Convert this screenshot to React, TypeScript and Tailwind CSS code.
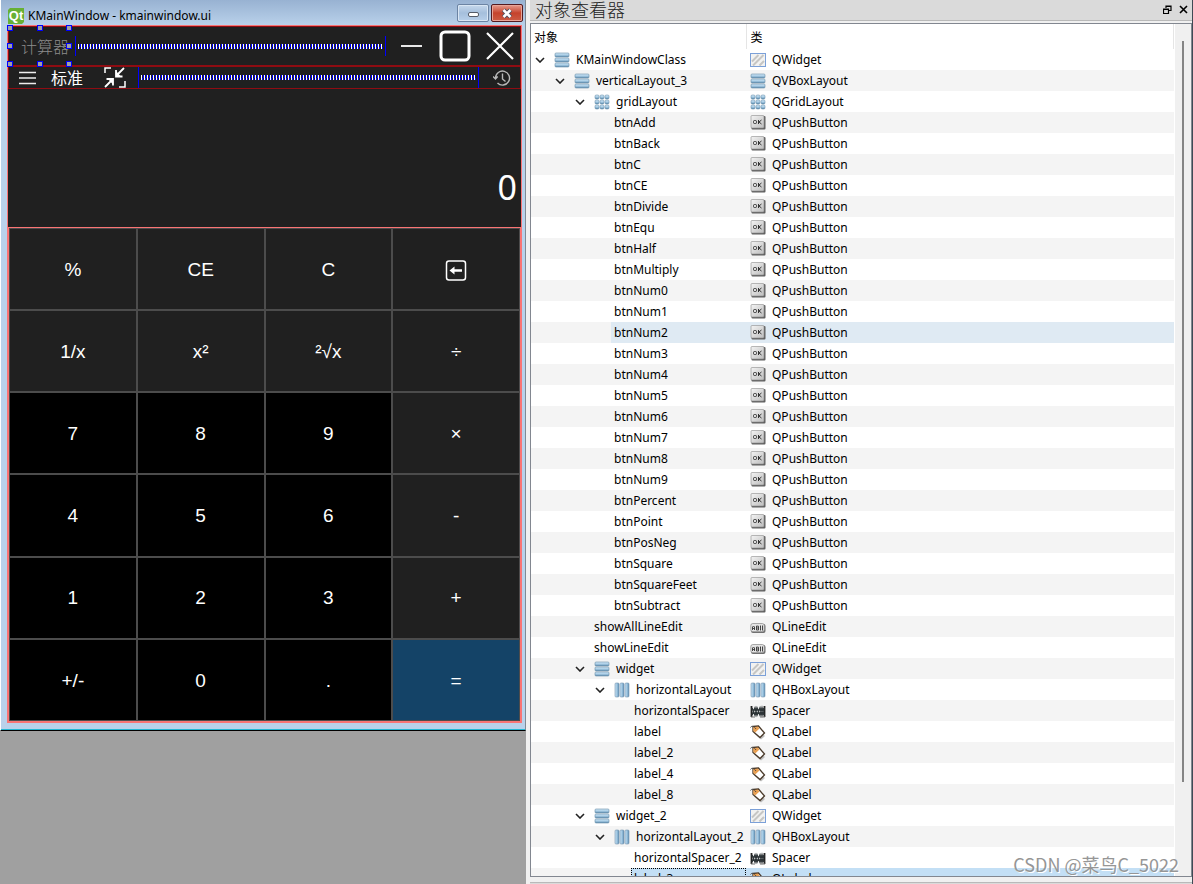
import { useState } from "react";

type Kind = "widget" | "vbox" | "hbox" | "grid" | "button" | "edit" | "spacer" | "label";

type TreeItem = { name: string; cls: string; kind: Kind; depth: number; icon?: Kind };

const BUTTONS = [
  "btnAdd", "btnBack", "btnC", "btnCE", "btnDivide", "btnEqu", "btnHalf", "btnMultiply",
  "btnNum0", "btnNum1", "btnNum2", "btnNum3", "btnNum4", "btnNum5", "btnNum6", "btnNum7",
  "btnNum8", "btnNum9", "btnPercent", "btnPoint", "btnPosNeg", "btnSquare", "btnSquareFeet",
  "btnSubtract",
];

const ITEMS: TreeItem[] = [
  { name: "KMainWindowClass", cls: "QWidget", kind: "widget", depth: 0, icon: "vbox" },
  { name: "verticalLayout_3", cls: "QVBoxLayout", kind: "vbox", depth: 1, icon: "vbox" },
  { name: "gridLayout", cls: "QGridLayout", kind: "grid", depth: 2, icon: "grid" },
  ...BUTTONS.map((name): TreeItem => ({ name, cls: "QPushButton", kind: "button", depth: 3 })),
  { name: "showAllLineEdit", cls: "QLineEdit", kind: "edit", depth: 2 },
  { name: "showLineEdit", cls: "QLineEdit", kind: "edit", depth: 2 },
  { name: "widget", cls: "QWidget", kind: "widget", depth: 2, icon: "vbox" },
  { name: "horizontalLayout", cls: "QHBoxLayout", kind: "hbox", depth: 3, icon: "hbox" },
  { name: "horizontalSpacer", cls: "Spacer", kind: "spacer", depth: 4 },
  { name: "label", cls: "QLabel", kind: "label", depth: 4 },
  { name: "label_2", cls: "QLabel", kind: "label", depth: 4 },
  { name: "label_4", cls: "QLabel", kind: "label", depth: 4 },
  { name: "label_8", cls: "QLabel", kind: "label", depth: 4 },
  { name: "widget_2", cls: "QWidget", kind: "widget", depth: 2, icon: "vbox" },
  { name: "horizontalLayout_2", cls: "QHBoxLayout", kind: "hbox", depth: 3, icon: "hbox" },
  { name: "horizontalSpacer_2", cls: "Spacer", kind: "spacer", depth: 4 },
  { name: "label_3", cls: "QLabel", kind: "label", depth: 4 },
];

const INDENT = ["pl-0", "pl-5", "pl-10", "pl-15", "pl-20"];

const KEYS = [
  ["%", "CE", "C", "back"],
  ["1/x", "x²", "²√x", "÷"],
  ["7", "8", "9", "×"],
  ["4", "5", "6", "-"],
  ["1", "2", "3", "+"],
  ["+/-", "0", ".", "="],
];

function KindIcon({ kind }: { kind: Kind }) {
  return (
    <svg width="16" height="16" viewBox="0 0 16 16" className="shrink-0">
      <defs>
        <linearGradient id="barV" x1="0" y1="0" x2="0" y2="1">
          <stop offset="0" stopColor="#cfe6f5" />
          <stop offset="0.5" stopColor="#a9cde6" />
          <stop offset="1" stopColor="#5a89ac" />
        </linearGradient>
        <linearGradient id="barH" x1="0" y1="0" x2="1" y2="0">
          <stop offset="0" stopColor="#c9e2f3" />
          <stop offset="0.5" stopColor="#9cc4e0" />
          <stop offset="1" stopColor="#5d8db2" />
        </linearGradient>
        <linearGradient id="keyFace" x1="0" y1="0" x2="1" y2="1">
          <stop offset="0" stopColor="#f4f4f4" />
          <stop offset="1" stopColor="#bdbdbd" />
        </linearGradient>
      </defs>
      {kind === "vbox" &&
        [1, 6, 11].map((y) => (
          <rect key={y} x="1" y={y} width="14" height="4" rx="1" fill="url(#barV)" stroke="#6a8ea8" strokeWidth="0.6" />
        ))}
      {kind === "hbox" &&
        [1, 6, 11].map((x) => (
          <rect key={x} x={x} y="1" width="4" height="14" rx="1" fill="url(#barH)" stroke="#7796ae" strokeWidth="0.6" />
        ))}
      {kind === "grid" &&
        [1, 6, 11].map((y) =>
          [1, 6, 11].map((x) => (
            <rect key={`${x}-${y}`} x={x} y={y} width="4" height="4" rx="1.2" fill="url(#barV)" stroke="#5f86a3" strokeWidth="0.5" />
          ))
        )}
      {kind === "widget" && (
        <>
          <rect x="0.5" y="1.5" width="15" height="13" fill="#f2f2f1" stroke="#7ba0d8" />
          <path d="M2 9.5 8.5 3M3 13.5 13.5 3M9.5 13.5 14 9" stroke="#c6c6c4" strokeWidth="2" />
        </>
      )}
      {kind === "button" && (
        <>
          <rect x="1.5" y="1" width="14" height="13.5" rx="1" fill="#5f5f5f" />
          <rect x="1" y="0.5" width="13" height="12.5" rx="1" fill="url(#keyFace)" stroke="#8c8c8c" strokeWidth="0.6" />
          <rect x="3.5" y="5.5" width="3" height="3" rx="1" fill="none" stroke="#333" strokeWidth="1" />
          <path d="M8.500 5v4M11.500 5 9 7l2.500 2" fill="none" stroke="#333" strokeWidth="1" />
        </>
      )}
      {kind === "edit" && (
        <>
          <rect x="1" y="5" width="14.5" height="9" rx="2" fill="#6e6e6e" />
          <rect x="0.8" y="4.5" width="13.5" height="8.2" rx="2" fill="#e4e4e4" stroke="#888" strokeWidth="0.7" />
          <path
            d="M2.500 11V8l1-1 1 1v3M2.500 9.500h2M6.500 7v4h2V7.200zM6.500 9h2M10.500 7v4M10 7h1M10 11h1M12.500 6.500v5"
            fill="none"
            stroke="#333"
            strokeWidth="0.9"
          />
        </>
      )}
      {kind === "spacer" && (
        <>
          <path d="M1.500 3v11M14.500 3v11" stroke="#222" strokeWidth="1.800" />
          <path d="M2 5 5 12 7 5l3 7 2-7 2 7M2 12l3-7 2 7 3-7 2 7 2-7" fill="none" stroke="#2d3437" strokeWidth="1.500" />
          <path d="M1 14h4M10 14h5" stroke="#777" />
        </>
      )}
      {kind === "label" && (
        <>
          <path d="m6.500 4.500 8.500 7.500-4 3.500L4 9.500z" fill="#999" opacity="0.6" />
          <path d="M3 2.500 8.500 2l6 7-4.500 4.500L3 7.500z" fill="#fff" stroke="#4a3a2a" strokeWidth="1.300" />
          <path d="M3.200 3.200 8 2.600l1.500 2L5.200 8.400 3.300 7z" fill="#e9a052" />
          <path d="M6 5C4 2 1.500 1.500.5 3.500" fill="none" stroke="#444" strokeWidth="0.900" />
        </>
      )}
    </svg>
  );
}

function Chevron() {
  return (
    <svg width="10" height="6" viewBox="0 0 10 6" fill="none" stroke="#222" strokeWidth="1.6">
      <path d="m1 1 4 4 4-4" />
    </svg>
  );
}

// Zigzag that Designer draws for a horizontal spacer
function Spring({ id, tall }: { id: string; tall?: boolean }) {
  return (
    <div className={`flex flex-1 items-center border-x border-[#0000ff] px-0.5 ${tall ? "h-[21px]" : "h-5"}`}>
      <svg className="w-full" height="5" shapeRendering="crispEdges">
        <defs>
          <pattern id={id} width="3" height="5" patternUnits="userSpaceOnUse">
            <rect width="1" height="5" fill="#fff" />
            <rect x="1" y="3" width="1" height="2" fill="#0000ff" />
            <rect x="2" y="0" width="1" height="3" fill="#0000ff" />
          </pattern>
        </defs>
        <rect width="100%" height="5" fill={`url(#${id})`} />
      </svg>
    </div>
  );
}

function SelectionHandles() {
  const spots = [
    "-left-0.5 -top-0.5", "left-7 -top-0.5", "-right-0.5 -top-0.5",
    "-left-0.5 top-4", "-right-0.5 top-4",
    "-left-0.5 -bottom-0.5", "left-7 -bottom-0.5", "-right-0.5 -bottom-0.5",
  ];
  return (
    <>
      {spots.map((spot) => (
        <span key={spot} className={`absolute size-1.5 border border-[#0000ff] bg-[#a0a0a4] ${spot}`} />
      ))}
    </>
  );
}

function KeyButton({ label }: { label: string }) {
  const digit = /^[0-9.]$|^\+\/-$/.test(label);
  const bg = label === "=" ? "bg-[#144367]" : digit ? "bg-black" : "bg-[#202020]";
  return (
    <button
      aria-label={label === "back" ? "Backspace" : undefined}
      className={`flex min-h-20 items-center justify-center border border-[#4c4c4c] pt-0.5 ${bg}`}
    >
      {label === "back" ? (
        <svg width="22" height="22" viewBox="0 0 22 22" fill="none" stroke="#fff">
          <rect x="1.500" y="2" width="19" height="19" rx="2.500" strokeWidth="1.500" />
          <path d="M8 11.500h9" strokeWidth="2.500" />
          <path d="m4.500 11.500 5-4v8z" fill="#fff" stroke="none" />
        </svg>
      ) : (
        label
      )}
    </button>
  );
}

function CalculatorForm() {
  return (
    <div className="border border-[#fa7474] bg-[#202020]">
      {/* title row */}
      <div className="flex h-10 items-center border border-[#8f0c12]">
        <div className="relative flex h-full w-[61px] shrink-0 items-center pl-3 text-base text-[#8c8c8c]">
          <span className="font-['Noto_Sans_CJK_SC',sans-serif] leading-6 font-light">计算器</span>
          <SelectionHandles />
        </div>
        <div className="flex flex-1 items-center pl-[5px]">
          <Spring id="springTitle" />
        </div>
        <div className="flex items-center gap-[14px] pr-[5px] pl-[15px]">
          <button aria-label="Minimize">
            <svg width="24" height="32" viewBox="0 0 24 32" className="block">
              <path d="M0 16h21" stroke="#e8e8e8" strokeWidth="2" />
            </svg>
          </button>
          <button aria-label="Maximize">
            <svg width="32" height="32" viewBox="0 0 32 32" className="block">
              <rect x="2" y="2" width="28" height="28" rx="4" fill="none" stroke="#fff" strokeWidth="3" />
            </svg>
          </button>
          <button aria-label="Close">
            <svg width="30" height="32" viewBox="0 0 30 32" className="block">
              <path d="M2 3 28 29M28 3 2 29" stroke="#fff" strokeWidth="2.200" />
            </svg>
          </button>
        </div>
      </div>

      {/* mode row */}
      <div className="flex h-[23px] items-center border border-[#8f0c12]">
        <button aria-label="Menu" className="pl-[10px]">
          <svg width="18" height="14" viewBox="0 0 18 14" className="block">
            <path d="M0 1.500h17M0 7h17M0 12.500h17" stroke="#eee" strokeWidth="1.500" />
          </svg>
        </button>
        <span className="pb-0.5 pl-[14px] font-['Noto_Sans_CJK_SC',sans-serif] text-base leading-5 text-white">标准</span>
        <button aria-label="Keep on top" className="pl-[21px]">
          <svg width="22" height="21" viewBox="0 0 22 21" className="block" fill="none" stroke="#fff">
            <path d="M1 6V1h6M21 14v6h-6" strokeWidth="1.500" />
            <path d="m20 1-7 7M1 20l7-7" strokeWidth="1.800" />
            <path d="M12 3v6.500h6.500M2.500 12H9v6.500" strokeWidth="1.800" />
            <path d="m12 4 5 5.500h-5zM9 17.500 4 12h5z" fill="#fff" stroke="none" />
          </svg>
        </button>
        <div className="flex flex-1 items-center pl-3">
          <Spring id="springMode" tall />
        </div>
        <button aria-label="History" className="pr-[9px] pl-[14px]">
          <svg width="18" height="18" viewBox="0 0 18 18" className="block" fill="none" stroke="#b8b8b8" strokeWidth="1.400">
            <path d="M2.500 9a7 7 0 1 1 2 5M9.500 4.500V10l3 2.500M0 7.500l2.500 2.500 2.200-2.500" />
          </svg>
        </button>
      </div>

      <input
        aria-label="Expression"
        readOnly
        value=""
        className="block h-[58px] w-full bg-transparent px-1 text-right text-white outline-none"
      />
      <input
        aria-label="Result"
        readOnly
        value="0"
        className="block h-20 w-full bg-transparent px-1 text-right font-['Noto_Sans',sans-serif] text-[34px] leading-[80px] text-white outline-none"
      />

      <div className="grid min-h-[495px] grid-cols-4 border border-[#fa7474] font-['Liberation_Sans',sans-serif] text-[19px] text-white">
        {KEYS.flat().map((label) => (
          <KeyButton key={label} label={label} />
        ))}
      </div>
    </div>
  );
}

function FormWindow() {
  return (
    <section className="border-r border-b border-l border-r-[#7f8a94] border-b-black border-l-white bg-[#b9d1ea] font-['Noto_Sans',sans-serif]">
      <header className="flex h-[25px] items-start bg-linear-to-b from-[#98b2d2] to-[#b9d1ea] pr-0.5 pl-[7px]">
        <svg width="16" height="16" viewBox="0 0 16 16" className="mt-2 shrink-0">
          <path d="M2 0h14v14l-2 2H0V2z" fill="#67b035" />
          <text x="8" y="12" textAnchor="middle" fontSize="13" fontWeight="700" fontFamily="Liberation Sans" fill="#fff">
            Qt
          </text>
        </svg>
        <h1 className="mt-[7px] flex-1 truncate pl-1 text-xs leading-[18px] text-black">KMainWindow - kmainwindow.ui</h1>
        <div className="mt-1 flex gap-0.5">
          <button
            aria-label="Minimize window"
            className="flex h-[18px] w-8 items-end justify-center rounded-xs border border-[#6c84a3] bg-linear-to-b from-[#c6d8ec] via-[#a5bfdc] to-[#b8d0ea] pb-1 shadow-[inset_0_0_0_1px_#d9e6f4]"
          >
            <span className="h-[5px] w-[11px] rounded-xs border border-[#555c68] bg-white" />
          </button>
          <button
            aria-label="Close window"
            className="flex h-[18px] w-8 items-center justify-center rounded-xs border border-[#541a20] bg-linear-to-b from-[#e59a8d] via-[#c5422c] to-[#cc5c45] shadow-[inset_0_0_0_1px_#e8a598]"
          >
            <svg width="12" height="11" viewBox="0 0 12 11">
              <path d="m2.500 2 7 7M9.500 2l-7 7" stroke="#4d5060" strokeWidth="4.500" />
              <path d="m2.500 2 7 7M9.500 2l-7 7" stroke="#fff" strokeWidth="2.600" />
            </svg>
          </button>
        </div>
      </header>
      <div className="border-b border-[#25b7d3] pr-[3px] pb-1.5 pl-1.5">
        <CalculatorForm />
      </div>
    </section>
  );
}

function TreeRow({ item, hovered, selected, onSelect }: {
  item: TreeItem;
  hovered: boolean;
  selected: boolean;
  onSelect: () => void;
}) {
  const tint = selected ? "bg-[#c3dff5]" : hovered ? "bg-[#dfeaf3]" : "";
  return (
    <tr className="h-[21px] even:bg-[#f4f4f4]" onClick={onSelect} aria-selected={selected}>
      <td className="p-0">
        <div className={`flex h-[21px] ${INDENT[item.depth]}`}>
          <span className="flex w-5 shrink-0 items-center pl-1">{item.icon && <Chevron />}</span>
          <span
            className={`flex min-w-0 flex-1 items-center ${tint} ${selected ? "outline-1 -outline-offset-1 outline-black outline-dotted" : ""} gap-1.5 pl-[3px]`}
          >
            {item.icon && <KindIcon kind={item.icon} />}
            <span className="whitespace-nowrap">{item.name}</span>
          </span>
        </div>
      </td>
      <td className="p-0">
        <div className={`flex h-[21px] items-center gap-1.5 pl-1 ${tint}`}>
          <KindIcon kind={item.kind} />
          {item.cls}
        </div>
      </td>
    </tr>
  );
}

function ObjectInspector() {
  const [selected, setSelected] = useState("label_3");

  return (
    <section className="flex min-h-0 flex-col border-r border-[#3f4a55] bg-[#f0f0f0] pl-1">
      <header className="flex h-[21px] shrink-0 items-start border-b border-[#b9b9b9] bg-[#dadada] pr-1 pl-[5px]">
        <h2 className="flex-1 font-['Noto_Sans_CJK_SC',sans-serif] text-lg leading-[18px] font-light text-[#222]">对象查看器</h2>
        <button aria-label="Float" className="pt-[5px] pr-[7px]">
          <svg width="9" height="9" viewBox="0 0 9 9" fill="none" stroke="#000" className="block">
            <path d="M3 3V1h5v4.500H6M3 1.500h5M.5 4h5v4.500h-5zM.5 4.500h5" strokeWidth="1.200" />
          </svg>
        </button>
        <button aria-label="Close inspector" className="pt-[5px]">
          <svg width="9" height="9" viewBox="0 0 9 9" className="block">
            <path d="m1 1 7 7M8 1 1 8" stroke="#000" strokeWidth="1.600" />
          </svg>
        </button>
      </header>

      <div className="mt-0.5 flex min-h-0 flex-1 overflow-hidden border border-[#828790] bg-white">
        <div className="min-w-0 flex-1 overflow-hidden pr-px">
          <table className="w-full table-fixed border-collapse font-['Noto_Sans',sans-serif] text-xs leading-5 text-black">
            <thead>
              <tr className="h-[25px] font-['Noto_Sans_CJK_SC',sans-serif]">
                <th className="w-[215px] border-r border-[#e5e5e5] p-0 pl-[3px] text-left font-normal">对象</th>
                <th className="border-r border-[#e5e5e5] p-0 pl-1 text-left font-normal">类</th>
              </tr>
            </thead>
            <tbody>
              {ITEMS.map((item) => (
                <TreeRow
                  key={item.name}
                  item={item}
                  hovered={item.name === "btnNum2"}
                  selected={item.name === selected}
                  onSelect={() => setSelected(item.name)}
                />
              ))}
            </tbody>
          </table>
        </div>
        <div className="flex w-4 shrink-0 justify-center bg-[#f0f0f0] pt-[17px] pb-[94px]">
          <div className="w-0.5 bg-[#858585]" />
        </div>
      </div>
      <div className="mt-[5px] h-0.5 shrink-0 border-t border-[#b9b9b9] bg-[#dadada]" />
    </section>
  );
}

export default function App() {
  return (
    <main className="relative grid h-screen grid-cols-[526fr_667fr] overflow-hidden bg-[#f0f0f0]">
      <div className="min-w-0 overflow-hidden bg-[#a0a0a0]">
        <FormWindow />
      </div>
      <ObjectInspector />
      <p className="pointer-events-none absolute right-3.5 bottom-2 font-['Noto_Sans_CJK_SC',sans-serif] text-lg leading-6 text-[#969696] [text-shadow:1px_1px_0_#ffffff]">
        CSDN @菜鸟C_5022
      </p>
    </main>
  );
}
